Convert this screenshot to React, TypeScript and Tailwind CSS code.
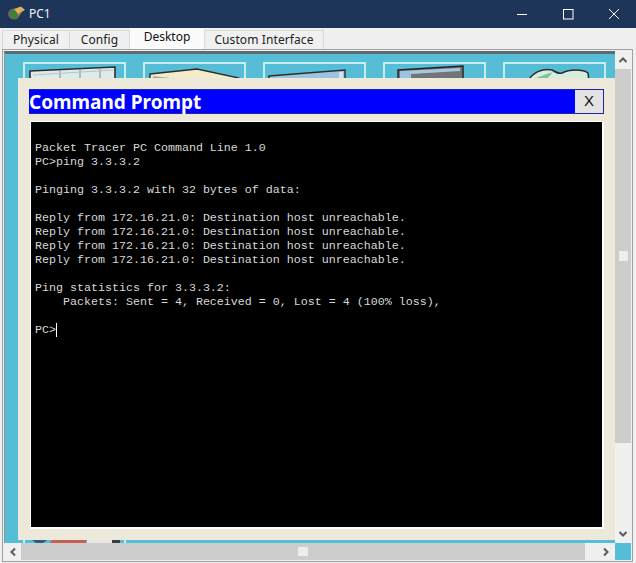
import React from "react";

const lines = [
  "Packet Tracer PC Command Line 1.0",
  "PC>ping 3.3.3.2",
  "",
  "Pinging 3.3.3.2 with 32 bytes of data:",
  "",
  "Reply from 172.16.21.0: Destination host unreachable.",
  "Reply from 172.16.21.0: Destination host unreachable.",
  "Reply from 172.16.21.0: Destination host unreachable.",
  "Reply from 172.16.21.0: Destination host unreachable.",
  "",
  "Ping statistics for 3.3.3.2:",
  "    Packets: Sent = 4, Received = 0, Lost = 4 (100% loss),",
  "",
];

function Tab({ label, active, className }: { label: string; active?: boolean; className: string }) {
  return (
    <div
      className={
        active
          ? `flex items-center justify-center bg-[#fbfbfb] h-[21px] text-[12px] text-[#111] pb-[3px] font-['Noto_Sans',sans-serif] ${className}`
          : `flex items-center justify-center bg-[#f0f0f0] border-t border-x border-[#d9d9d9] h-[19px] text-[12px] text-[#222] tracking-[0.1px] font-['Noto_Sans',sans-serif] ${className}`
      }
    >
      {label}
    </div>
  );
}

function Tile({ children }: { children: React.ReactNode }) {
  return (
    <div className="w-[103px] h-[70px] border-t-2 border-x-2 border-[#c5eef0] shrink-0">
      <svg width="99" height="68" viewBox="0 0 99 68">
        {children}
      </svg>
    </div>
  );
}

function Chevron({ d }: { d: string }) {
  return (
    <svg width="10" height="10" viewBox="0 0 10 10" fill="none">
      <path d={d} stroke="#5a5a5a" strokeWidth="2" />
    </svg>
  );
}

export default function App() {
  return (
    <div className="w-[636px] h-[563px] bg-[#f0f0f0] flex flex-col overflow-hidden font-['Liberation_Sans',sans-serif]">
      <div className="h-[28px] bg-[#1c3558] flex items-center shrink-0 pl-[7px]">
        <svg width="18" height="16" viewBox="0 0 18 16">
          <ellipse cx="7" cy="8" rx="6" ry="5.5" fill="#5f6a58" />
          <path d="M7 3 L14 0.5 L18 4 L11 8 Z" fill="#d9b45a" />
          <path d="M5 5 L9 5 L9 12 L6 13 Z" fill="#2f8c2a" />
          <path d="M10 8 L15 6 L12 10 Z" fill="#a98a3c" />
        </svg>
        <span className="ml-[4px] text-[12px] text-[#f0f3f7] font-['Noto_Sans',sans-serif]">PC1</span>
        <div className="ml-auto -mr-px flex items-center">
          <div className="w-[46px] flex justify-center">
            <svg width="12" height="12" viewBox="0 0 12 12"><path d="M1 6.5H11" stroke="#fff" strokeWidth="1" /></svg>
          </div>
          <div className="w-[46px] flex justify-center">
            <svg width="11" height="11" viewBox="0 0 11 11" fill="none"><rect x="0.5" y="0.5" width="9.5" height="9.5" stroke="#fff" /></svg>
          </div>
          <div className="w-[46px] flex justify-center">
            <svg width="12" height="12" viewBox="0 0 12 12" fill="none"><path d="M1 1L11 11M11 1L1 11" stroke="#fff" strokeWidth="1" /></svg>
          </div>
        </div>
      </div>

      <div className="h-[21px] flex items-end pl-[2px] shrink-0">
        <Tab label="Physical" className="w-[68px]" />
        <Tab label="Config" className="w-[60px] border-l-0" />
        <Tab label="Desktop" active className="w-[74px]" />
        <Tab label="Custom Interface" className="w-[120px]" />
      </div>

      <div className="relative ml-[2px] mr-[3px] mb-px flex-1 border border-[#a0a0a0] bg-[#f0f0f0] p-px">
        <div className="h-full grid grid-cols-[1fr_16px] grid-rows-[1fr_17px]">
          <div className="bg-[#55bdd6] border-t-[3px] border-t-[#5e6b70] border-l border-l-[#8a9599] overflow-hidden flex flex-col justify-between pl-[18px]">
            <div className="flex gap-[17px] pt-[8px]">
              <Tile>
                <path d="M5 7 L90 3 L90 20 L5 20 Z" fill="#dfeaec" stroke="#2d2d2d" strokeWidth="1.6" />
                <path d="M35 6 V20 M55 5 V20 M75 4 V20" stroke="#8f9a9c" strokeWidth="1.2" />
                <path d="M8 11 L88 6" stroke="#b8c3c5" strokeWidth="1" />
              </Tile>
              <Tile>
                <path d="M5 10 L52 5 L94 14 L94 24 L5 24 Z" fill="#f3ebca" stroke="#2d2d2d" strokeWidth="1.4" />
                <path d="M8 13 L28 15" stroke="#9aa3a5" strokeWidth="1.4" />
              </Tile>
              <Tile>
                <path d="M4 12 L80 6 L80 24 L4 24 Z" fill="#9dc3e0" stroke="#2d2d2d" strokeWidth="1.4" />
                <path d="M7 14 H12 V20 H7 Z" fill="#e4eef4" />
                <path d="M74 8 H78 V20 H74 Z" fill="#d5e3ec" />
              </Tile>
              <Tile>
                <path d="M13 6 L78 2 L78 24 L13 24 Z" fill="#717578" stroke="#222" strokeWidth="1.4" />
                <path d="M15 7 L26 6.5 L26 24 L15 24 Z" fill="#9dc3e0" />
                <path d="M26 6.5 L75 4 L75 7 L26 10 Z" fill="#a9c7dc" />
              </Tile>
              <Tile>
                <path d="M23 17 C28 8 38 4 47 6 C52 9 54 10 57 9 C64 5 78 5 83 9 L84 18 Z" fill="#d5ecdf" stroke="#2d2d2d" strokeWidth="1.5" />
                <path d="M26 17 C34 12 42 10 48 8 L40 17 Z" fill="#7fbf9f" />
              </Tile>
            </div>
            <svg width="104" height="3" viewBox="0 0 104 3" className="shrink-0">
              <rect x="0" y="0" width="2" height="3" fill="#c5eef0" />
              <rect x="101" y="0" width="2" height="3" fill="#c5eef0" />
              <path d="M9 0 H24 L20 3 H13 Z" fill="#34597f" />
              <path d="M29 0 H64 L62 3 H27 Z" fill="#c75f58" />
              <rect x="64" y="0" width="25" height="3" fill="#e6e6e6" />
              <rect x="89" y="0" width="8" height="3" fill="#3d3d3d" />
            </svg>
          </div>

          <div className="flex flex-col items-center bg-[#f0f0f0]">
            <div className="w-full h-[18px] shrink-0 flex items-center justify-center">
              <Chevron d="M1.5 7L5 3.5L8.5 7" />
            </div>
            <div className="w-full h-[374px] shrink-0 bg-[#cdcdcd] flex items-center justify-center">
              <div className="w-[9px] h-[10px] bg-[#eeeeee]" />
            </div>
            <div className="w-full flex-1 flex items-end justify-center pb-[4px]">
              <Chevron d="M1.5 3L5 6.5L8.5 3" />
            </div>
          </div>

          <div className="flex items-center bg-[#f0f0f0]">
            <div className="w-[17px] h-full shrink-0 flex items-center justify-center">
              <Chevron d="M7 1.5L3.5 5L7 8.5" />
            </div>
            <div className="flex-1 h-full bg-[#cdcdcd] flex items-center justify-center">
              <div className="w-[10px] h-[9px] bg-[#eeeeee]" />
            </div>
            <div className="w-[30px] h-full shrink-0 flex items-center justify-end pr-[4px]">
              <Chevron d="M3 1.5L6.5 5L3 8.5" />
            </div>
          </div>
          <div className="bg-[#55bdd6]" />
        </div>

        <div className="absolute left-[15px] top-[28px] w-[597px] h-[462px] bg-[#ece9db] pt-[11px] pl-[11px] flex flex-col">
          <div className="h-[25px] w-[575px] bg-[#0000ff] flex items-center justify-between shrink-0 border-y border-r border-[#2222aa]">
            <span className="text-[19px] font-bold text-white font-['Noto_Sans',sans-serif] leading-none pt-[2px]">Command Prompt</span>
            <div className="w-[28px] h-[23px] bg-[#e3e3e3] flex items-center justify-center text-[15px] text-[#111]">X</div>
          </div>
          <div className="mt-[7px] ml-px w-[574px] h-[408px] bg-black border-t border-l border-r-2 border-b-2 border-white pt-[19px] pl-[4px] font-['Liberation_Mono',monospace] text-[11.67px] leading-[14px] text-[#d8d8d8] whitespace-pre">
            {lines.map((l, i) => (
              <div key={i} className="h-[14px]">{l}</div>
            ))}
            <div className="h-[14px] flex">
              <span>PC&gt;</span>
              <span className="w-px h-[14px] bg-white" />
            </div>
          </div>
        </div>
      </div>
    </div>
  );
}
